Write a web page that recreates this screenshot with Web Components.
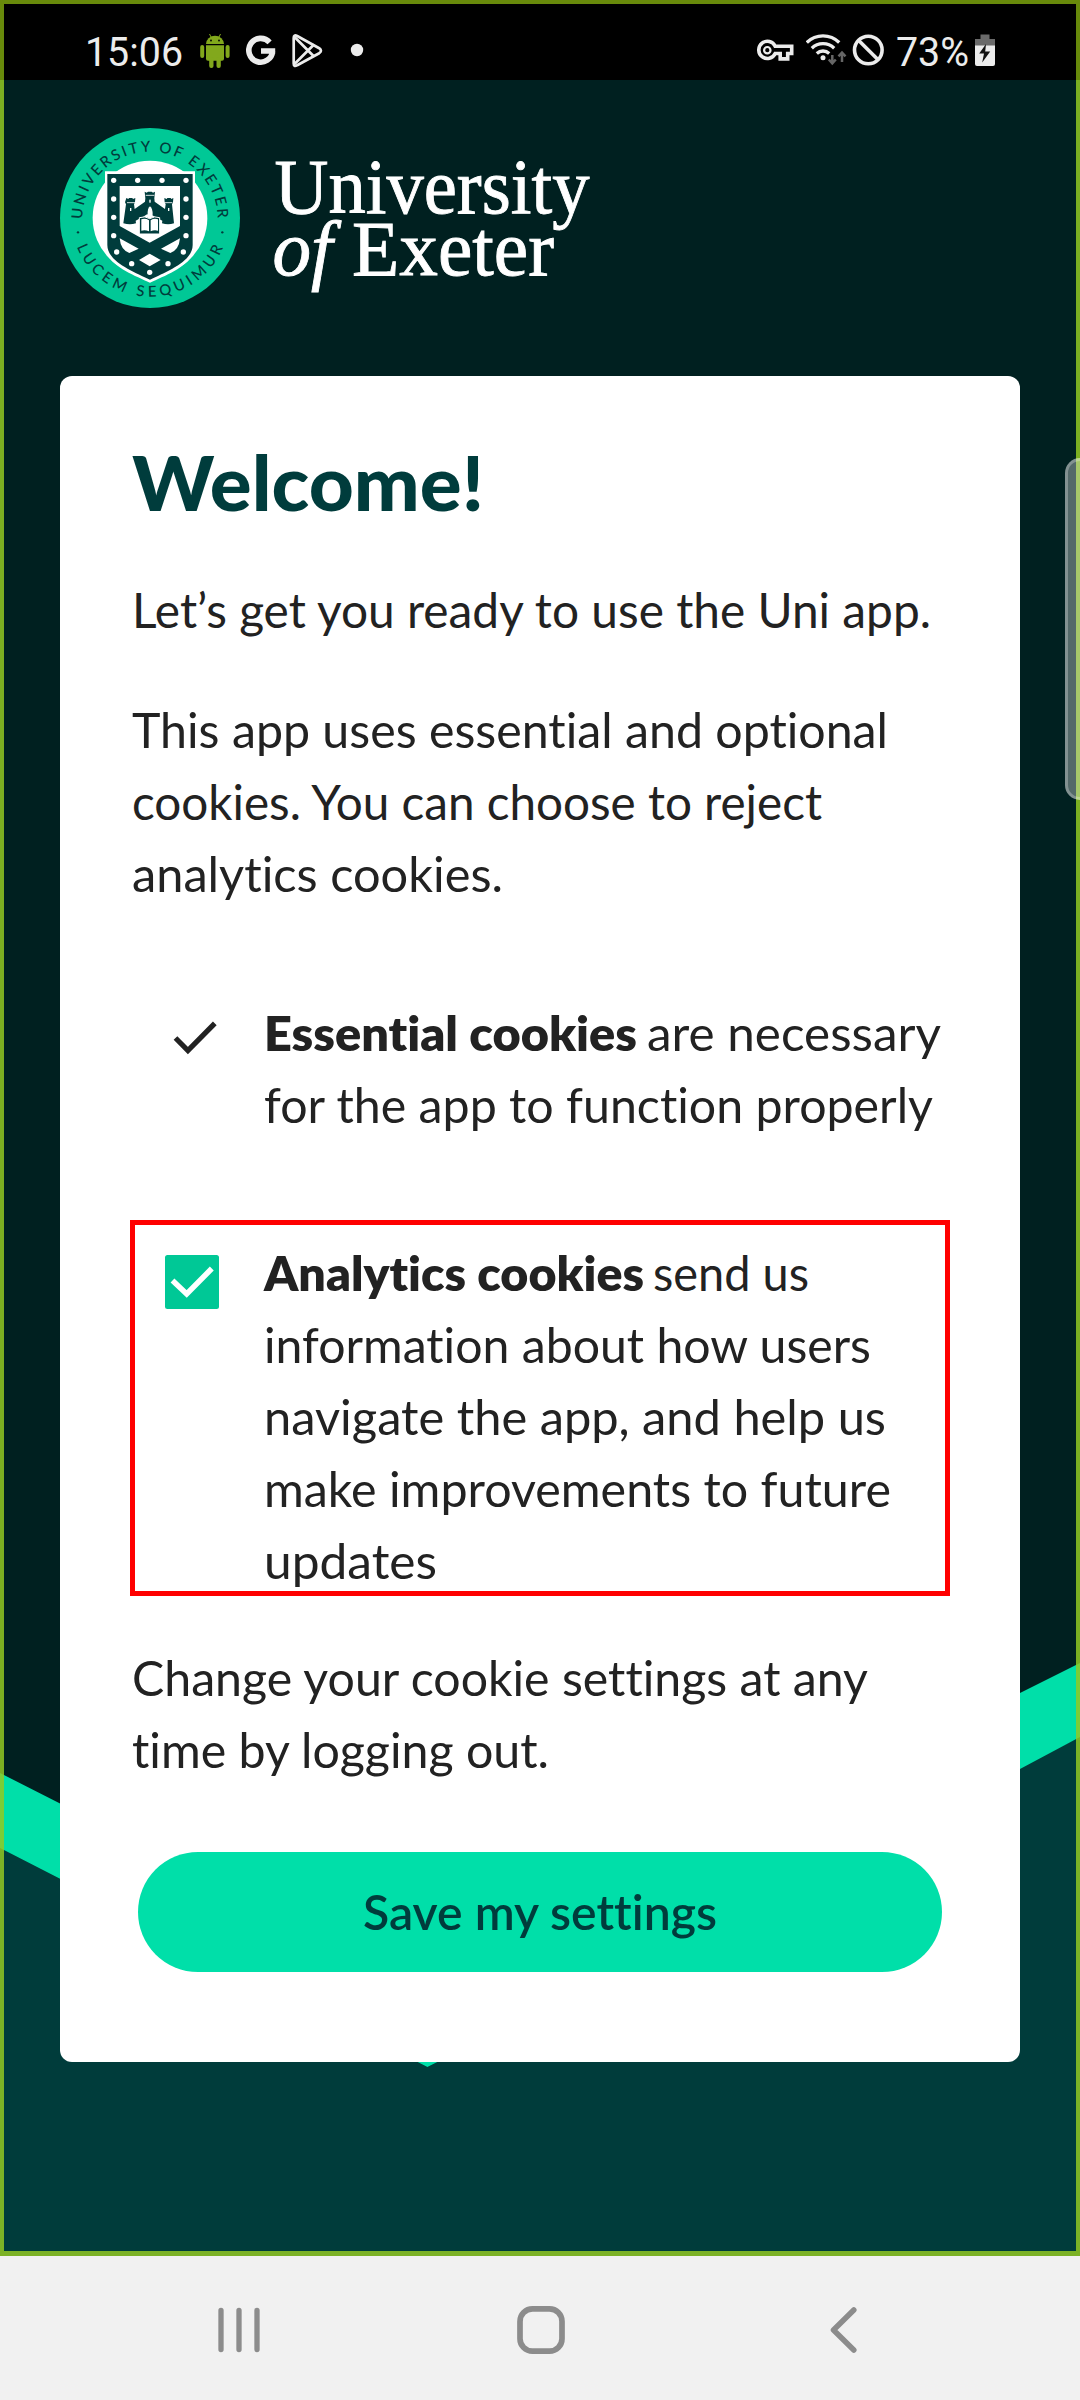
<!DOCTYPE html>
<html lang="en">
<head>
<meta charset="utf-8">
<title>University of Exeter</title>
<style>
html,body{margin:0;padding:0}
body{width:1080px;height:2400px;overflow:hidden;background:#f1f1f1;font-family:Lato,"Open Sans",sans-serif;color:#222;font-variant-ligatures:none}
</style>
</head>
<body>
<uni-app></uni-app>
<script>
const define = (name, html, ready) => {
  const t = document.createElement('template');
  t.innerHTML = html;
  customElements.define(name, class extends HTMLElement {
    constructor() {
      super();
      this.attachShadow({ mode: 'open' }).append(t.content.cloneNode(true));
    }
    connectedCallback() { if (ready) ready(this, this.shadowRoot); }
  });
};

/* A single line of text stretched to the width given in its w attribute. */
define('fit-line', `
<style>
:host{display:block;white-space:nowrap;overflow:visible}
span{display:inline-block;transform-origin:0 50%}
</style><span><slot></slot></span>`, (el, root) => {
  const span = root.querySelector('span');
  const w = +el.getAttribute('w');
  el.style.width = w + 'px';
  const fit = () => {
    span.style.transform = 'none';
    const n = span.getBoundingClientRect().width;
    if (n) span.style.transform = 'scaleX(' + (w / n) + ')';
  };
  fit();
  requestAnimationFrame(fit);
});

define('status-bar', `
<style>
:host{display:flex;height:80px;background:#000;color:#ececec;font:400 40px/106px Roboto,sans-serif;align-items:flex-start;justify-content:space-between;padding:0 85px 0 85px;box-sizing:border-box}
div{display:flex;height:80px}
svg{display:block;flex:none}
</style>
<div>
<fit-line w="98">15:06</fit-line>
<svg style="margin-left:17px" width="30" height="80" viewBox="200 0 30 80" fill="#82a81c">
<path d="M206 44a9 8.300 0 0 1 18 0z"/><path d="M206 45.200h18v13.600a2 2 0 0 1-2 2h-14a2 2 0 0 1-2-2z"/>
<rect x="200.200" y="45" width="4" height="13" rx="2"/><rect x="225.600" y="45" width="4" height="13" rx="2"/>
<rect x="209.200" y="57" width="4.300" height="11" rx="2"/><rect x="216.500" y="57" width="4.300" height="11" rx="2"/>
<path d="M209.500 34l2 4M220.500 34l-2 4" stroke="#82a81c" stroke-width="1"/>
<circle cx="211" cy="40.500" r=".9" fill="#000"/><circle cx="219" cy="40.500" r=".9" fill="#000"/></svg>
<svg style="margin-left:16px" width="30" height="80" viewBox="246 0 30 80" fill="none" stroke="#ececec" stroke-width="5.600"><path d="M269.600 42.300A11.900 11.900 0 1 0 272.600 51.200M275.200 51H261"/></svg>
<svg style="margin-left:16px" width="32" height="80" viewBox="292 0 32 80" fill="none" stroke="#ececec" stroke-width="2.700" stroke-linejoin="round"><path d="M293.700 38v25.500q0 3.800 3.500 1.700l22-12q3.500-2.500 0-5l-22-12.200q-3.500-1.700-3.500 2z"/><path d="M294.500 37L314 56.500M294.500 64L314 44.500"/></svg>
<svg style="margin-left:26px" width="14" height="80" viewBox="350 0 14 80"><circle cx="357" cy="50" r="6.200" fill="#ececec"/></svg>
</div>
<div>
<svg width="38" height="80" viewBox="757 0 38 80" fill="none" stroke="#ececec" stroke-width="3.600"><path d="M775.200 46.300H791.700V53.500H787.700V58.900H780.200V53.500H775.200A8.600 8.600 0 1 1 775.200 46.300z" stroke-linejoin="miter"/><circle cx="767.300" cy="50.200" r="3.200" fill="none" stroke-width="2.200"/></svg>
<svg style="margin-left:11px" width="42" height="80" viewBox="806 0 42 80" fill="none" stroke="#ececec" stroke-width="3.300"><path d="M806.800 42.500a23 23 0 0 1 32.400 0M811.800 48.200a16 16 0 0 1 22.400 0M816.800 53.500a9 9 0 0 1 12.400 0"/><circle cx="823" cy="57.800" r="2.500" fill="#ececec" stroke="none"/><path d="M832.300 55v8M828.800 59.500l3.500 3.800 3.500-3.800M842 62v-9M838.500 56.300l3.500-3.800 3.500 3.800" stroke="#666" stroke-width="2.500"/></svg>
<svg style="margin-left:4px" width="34" height="80" viewBox="852 0 34 80" fill="none" stroke="#ececec" stroke-width="3.600"><circle cx="868.300" cy="50" r="13.800"/><path d="M858.500 40.200l19.600 19.600"/></svg>
<fit-line w="73" style="margin-left:10px">73%</fit-line>
<svg style="margin-left:6px" width="20" height="80" viewBox="975 0 20 80"><path d="M980.500 34.500h9v4.500h5.500v7h-20v-7h5.500z" fill="#6a6a6a"/><path d="M975 45.500h20v18.500q0 2-2 2h-16q-2 0-2-2z" fill="#ececec"/><path d="M986 44l-6.800 9.500h4.800l-1.800 9 8-11h-5z" fill="#111"/></svg>
</div>`);

define('uni-crest', `
<style>:host{display:block;width:180px;height:180px}svg{display:block;overflow:visible}text{font:500 45px Lato,sans-serif;fill:#003c3c}</style>
<svg width="180" height="180" viewBox="30 39 540 540">
<circle cx="300" cy="309" r="270" fill="#00c896"/><circle cx="300" cy="309" r="172" fill="#fff"/>
<defs><path id="up" d="M97 313A203 203 0 0 1 503 313"/><path id="down" d="M80.500 395A236 236 0 0 0 521.500 391"/></defs>
<text textLength="634"><textPath href="#up" textLength="634">UNIVERSITY OF EXETER</textPath></text>
<text textLength="562"><textPath href="#down" textLength="562">LUCEM SEQUIMUR</textPath></text>
<circle cx="84" cy="352" r="3.500" fill="#003c3c"/><circle cx="517" cy="352" r="3.500" fill="#003c3c"/>
<path d="M165 169H435V393C435 448 350 480 300 503C250 480 165 448 165 393Z" fill="#fff"/>
<path d="M172 177H428V390C428 440 350 470 300 494C250 470 172 440 172 390Z" fill="#003c3c"/>
<path d="M209 213H390V333L299 383L209 333Z" fill="#fff"/>
<path d="M209 370L266 401L238 414Q212 405 209 370ZM390 370L333 401L361 414Q387 405 390 370ZM299 416L332 435L299 454L267 435Z" fill="#fff"/>
<g fill="#fff"><circle cx="191" cy="196" r="8"/><circle cx="263" cy="196" r="8"/><circle cx="336" cy="196" r="8"/><circle cx="408" cy="196" r="8"/><circle cx="191" cy="252" r="8"/><circle cx="408" cy="252" r="8"/><circle cx="191" cy="307" r="8"/><circle cx="408" cy="307" r="8"/><circle cx="191" cy="362" r="8"/><circle cx="408" cy="362" r="8"/><circle cx="200" cy="411" r="8"/><circle cx="400" cy="411" r="8"/><circle cx="245" cy="446" r="8"/><circle cx="354" cy="446" r="8"/><circle cx="299" cy="472" r="8"/></g>
<g fill="#003c3c">
<path d="M229 249l6 3 2-3h10l2 3 7-3-1 13-3 6 2 14 31-22 1-10-2-20 6 3 4-3h11l4 3 6-3-2 20 1 10 31 22 2-14-3-6-1-13 7 3 2-3h10l2 3 6-3-1 13-3 6 6 57q-18 6-36 0l1-8-26-14q-14-12-28 0l-26 14 1 8q-18 6-38 0l8-57-3-6z"/>
<path d="M268 308q18-6 31 3 15-9 30-3v49h-61z" stroke="#fff" stroke-width="3"/></g>
<path d="M274 313q12-4 23 3v33q-11-5-23-2zM324 313q-12-4-22 3v33q10-5 22-2z" fill="#fff"/>
<path d="M293 299q-1-19 7-25 8 6 8 25-8 8-15 0z" fill="#fff"/>
<g stroke="#fff" stroke-width="2.500" fill="none"><path d="M231 263h24M287 241h26M343 263h24"/></g>
<g fill="#fff"><rect x="240" y="279" width="4" height="9"/><rect x="298" y="254" width="4" height="9"/><rect x="354" y="279" width="4" height="9"/></g>
</svg>`);

define('uni-wordmark', `
<style>:host{display:block}svg{display:block;overflow:visible}text{font-family:"Liberation Serif","Times New Roman",serif;font-size:79px;fill:#fff;stroke:#fff;stroke-width:.9}</style>
<svg width="330" height="160" viewBox="270 138 330 160">
<text x="274.500" y="213" textLength="315" lengthAdjust="spacingAndGlyphs">University</text>
<text x="272.500" y="275.300" textLength="60" lengthAdjust="spacingAndGlyphs" font-style="italic">of</text>
<text x="352" y="275.300" textLength="202" lengthAdjust="spacingAndGlyphs">Exeter</text>
</svg>`);

define('app-backdrop', `
<style>:host{position:absolute;inset:0;display:block}svg{display:block}</style>
<svg width="1080" height="2176" viewBox="0 80 1080 2176">
<rect y="80" width="1080" height="2176" fill="#002020"/>
<path d="M0 1848L427.400 2067L1080 1737V2256H0Z" fill="#003c3b"/>
<path d="M0 1773L427.400 1990L1080 1663V1737L1020 1769L427.400 2067L0 1848Z" fill="#00dfa9"/>
</svg>`);

define('cookie-item', `
<style>
:host{display:block}
.row{display:flex}
.mark{width:132px;flex:none}
.mark svg{display:block}
.boxed{margin-left:-2px;width:820px;height:376px;box-sizing:border-box;border:5px solid #f00;padding:12px 0 0}
.boxed .mark{width:129px}
.text{display:flex;flex-direction:column}
</style>
<div class="row"><div class="mark"></div><div class="text"><slot></slot></div></div>`, (el, root) => {
  const box = el.hasAttribute('checkbox');
  if (box) root.querySelector('.row').classList.add('boxed');
  root.querySelector('.mark').innerHTML = box
    ? '<svg width="129" height="80" viewBox="135 1237 129 80"><rect x="165" y="1255" width="54" height="54" rx="2.500" fill="#00c896"/><path d="M172.500 1280.500L186.700 1294L211.800 1268.500" fill="none" stroke="#fff" stroke-width="5.500"/></svg>'
    : '<svg width="132" height="80" viewBox="132 997 132 80"><path d="M175.500 1038L187.900 1050.500L214.800 1023.300" fill="none" stroke="#222" stroke-width="5.200"/></svg>';
});

define('text-row', `<style>:host{display:flex;height:72px}</style><slot></slot>`);

define('pill-button', `
<style>:host{display:flex}button{all:unset;display:flex;justify-content:center;box-sizing:border-box;width:804px;height:120px;border-radius:60px;background:#00dfa9;color:#003c3c;font:600 48px/120px Lato,sans-serif;font-variant-ligatures:none}</style>
<button><slot></slot></button>`);

define('welcome-card', `
<style>
:host{display:flex;flex-direction:column;box-sizing:border-box;width:960px;height:1686px;background:#fff;border-radius:12px;padding:58px 72px 0;font-size:48px;line-height:72px}
h1{margin:0 0 44px;font:900 76px/96px Lato,sans-serif;color:#003c3c}
p{margin:0 0 48px}
.essential{margin-top:39px}
.analytics{margin-top:79px;margin-bottom:46px}
b{font-weight:800}
pill-button{margin:66px 0 0 6px}
.last{margin:0}
</style>
<h1><fit-line w="352">Welcome!</fit-line></h1>
<p><fit-line w="799">Let’s get you ready to use the Uni app.</fit-line></p>
<p><fit-line w="756">This app uses essential and optional</fit-line><fit-line w="690">cookies. You can choose to reject</fit-line><fit-line w="371">analytics cookies.</fit-line></p>
<cookie-item class="essential">
<text-row><fit-line w="373"><b>Essential cookies</b></fit-line><fit-line w="294" style="margin-left:10px">are necessary</fit-line></text-row>
<fit-line w="669">for the app to function properly</fit-line>
</cookie-item>
<cookie-item class="analytics" checkbox>
<text-row><fit-line w="380"><b>Analytics cookies</b></fit-line><fit-line w="156" style="margin-left:9px">send us</fit-line></text-row>
<fit-line w="607">information about how users</fit-line>
<fit-line w="622">navigate the app, and help us</fit-line>
<fit-line w="627">make improvements to future</fit-line>
<fit-line w="173">updates</fit-line>
</cookie-item>
<p class="last"><fit-line w="736">Change your cookie settings at any</fit-line><fit-line w="417">time by logging out.</fit-line></p>
<pill-button><fit-line w="354">Save my settings</fit-line></pill-button>`);

define('nav-bar', `
<style>:host{display:flex;height:144px;background:#f1f1f1;align-items:center;padding:4px 0 0 214px;box-sizing:border-box}svg{display:block}</style>
<svg width="50" height="56" viewBox="214 2302 50 56" stroke="#8c8c8c" stroke-width="5.300" stroke-linecap="round"><path d="M221 2310.300V2349.500M239 2310.300V2349.500M257 2310.300V2349.500"/></svg>
<svg style="margin-left:249px" width="56" height="56" viewBox="513 2302 56 56" fill="none" stroke="#8c8c8c" stroke-width="5.700"><rect x="520" y="2308.900" width="42" height="42.300" rx="12.500"/></svg>
<svg style="margin-left:256px" width="36" height="56" viewBox="825 2302 36 56" fill="none" stroke="#8c8c8c" stroke-width="5.500" stroke-linecap="round" stroke-linejoin="round"><path d="M853.800 2310L833.500 2330L853.800 2350"/></svg>`);

/* Translucent window outline and the side-panel handle, above the content. */
define('edge-overlay', `
<style>
:host{position:absolute;inset:0 0 auto 0;height:2256px;display:block;overflow:hidden;pointer-events:none}
.a,.b{position:absolute;left:0;right:0;box-sizing:border-box;border:solid #688a0b;border-width:4px 4px 0}
.a{top:0;height:80px}
.b{top:80px;bottom:0;border-width:0 4px 5px;border-color:rgba(148,201,35,.84)}
.h{position:absolute;left:1065px;top:458px;width:40px;height:342px;box-sizing:border-box;border:3px solid rgba(255,255,255,.27);border-radius:15px;background:rgba(255,255,255,.33)}
</style><div class="a"></div><div class="b"></div><div class="h"></div>`);

define('uni-app', `
<style>
:host{position:relative;display:flex;flex-direction:column;width:1080px;height:2400px}
main{position:relative;height:2176px;box-sizing:border-box;padding:48px 60px 0}
header{position:relative;display:flex;gap:30px;height:248px}
uni-wordmark{margin-top:10px}
welcome-card{position:relative}
</style>
<status-bar></status-bar>
<main><app-backdrop></app-backdrop>
<header><uni-crest></uni-crest><uni-wordmark></uni-wordmark></header>
<welcome-card></welcome-card></main>
<nav-bar></nav-bar>
<edge-overlay></edge-overlay>`);
</script>
</body>
</html>
